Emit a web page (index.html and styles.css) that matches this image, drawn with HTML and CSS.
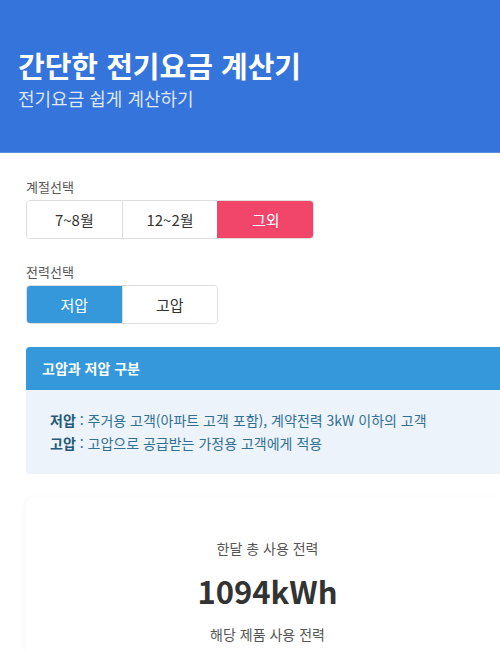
FILE: index.html
```html
<!DOCTYPE html>
<html lang="ko">

<head>
    <meta charset="UTF-8">
    <meta name="viewport" content="width=device-width, initial-scale=1.0">
    <title>간단한 전기요금 계산기</title>
    <link rel="stylesheet" href="styles.css">
</head>

<body>
    <header class="hero">
        <h1>간단한 전기요금 계산기</h1>
        <p>전기요금 쉽게 계산하기</p>
    </header>

    <div class="content">
        <div class="field">
            <div class="field-label">계절선택</div>
            <div class="seg seg-3">
                <button type="button">7~8월</button>
                <button type="button">12~2월</button>
                <button type="button" class="active-red">그외</button>
            </div>
        </div>

        <div class="field">
            <div class="field-label">전력선택</div>
            <div class="seg seg-2">
                <button type="button" class="active-blue">저압</button>
                <button type="button">고압</button>
            </div>
        </div>

        <div class="info-box">
            <div class="info-head">고압과 저압 구분</div>
            <div class="info-body">
                <p><b>저압</b> : 주거용 고객(아파트 고객 포함), 계약전력 3kW 이하의 고객</p>
                <p><b>고압</b> : 고압으로 공급받는 가정용 고객에게 적용</p>
            </div>
        </div>

        <div class="result-card">
            <div class="result-label">한달 총 사용 전력</div>
            <div class="result-value">1094kWh</div>
            <div class="result-label">해당 제품 사용 전력</div>
        </div>
    </div>
</body>

</html>
```

FILE: styles.css
```css
body {
    font-family: "Noto Sans CJK KR", "Noto Sans", sans-serif;
    background-color: #fff;
    margin: 0;
    padding: 0;
    overflow-x: hidden;
}

.hero {
    background-color: #3474db;
    border-bottom: 1px solid #5a8fe3;
    height: 153px;
    padding: 47px 18px 0;
    box-sizing: border-box;
    color: #fff;
}

.hero h1 {
    margin: 0;
    font-size: 29px;
    font-weight: 700;
    line-height: 36px;
}

.hero p {
    margin: 2px 0 0;
    font-size: 18px;
    line-height: 26px;
    color: rgba(255, 255, 255, 0.85);
}

.content {
    width: 483px;
    padding: 24px 0 0 26px;
}

.field {
    margin-bottom: 23px;
}

.field-label {
    font-size: 13px;
    color: #555;
    line-height: 20px;
    margin-bottom: 3px;
}

.seg {
    display: flex;
    border: 1px solid #ddd;
    border-radius: 4px;
    overflow: hidden;
    height: 39px;
    box-sizing: border-box;
}

.seg-3 {
    width: 288px;
}

.seg-2 {
    width: 192px;
}

.seg button {
    flex: 1;
    border: none;
    border-left: 1px solid #ddd;
    background-color: #fff;
    color: #333;
    font-family: inherit;
    font-size: 15px;
    padding: 0;
    cursor: pointer;
}

.seg button:first-child {
    border-left: none;
}

.seg button.active-red {
    background-color: #f1466a;
    color: #fff;
    border-left-color: #f1466a;
}

.seg button.active-blue {
    background-color: #3498db;
    color: #fff;
}

.info-box {
    margin-top: 23px;
    width: 520px;
    border-radius: 4px;
    overflow: hidden;
    background-color: #ecf3fb;
}

.info-head {
    background-color: #3498db;
    color: #fff;
    font-size: 14px;
    font-weight: 700;
    height: 43px;
    line-height: 43px;
    padding-left: 16px;
}

.info-body {
    padding: 19px 24px 19px;
    color: #31708f;
    font-size: 14px;
}

.info-body p {
    margin: 0;
    line-height: 23px;
}

.info-body b {
    color: #245a78;
}

.result-card {
    margin-top: 23px;
    background-color: #fff;
    border-radius: 8px;
    box-shadow: 0 1px 6px rgba(0, 0, 0, 0.06);
    padding: 40px 0 20px;
    text-align: center;
}

.result-label {
    font-size: 14px;
    color: #555;
    line-height: 22px;
}

.result-value {
    font-size: 31px;
    font-weight: 700;
    color: #333;
    line-height: 40px;
    margin: 12px 0 12px;
}
```
